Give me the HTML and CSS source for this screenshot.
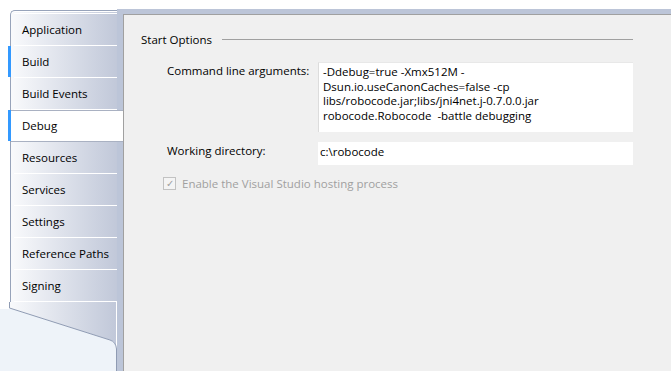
FILE: index.html
```html
<!DOCTYPE html>
<html lang="en">
<head>
    <meta charset="UTF-8">
    <title>Project Properties - Debug</title>
    <link rel="stylesheet" href="styles.css">
</head>
<body>
    <div class="window">
        <!-- Левая колонка с вкладками -->
        <div class="sidebar">
            <div class="strip">
                <ul class="tabs">
                    <li class="tab">Application</li>
                    <li class="tab hot">Build</li>
                    <li class="tab">Build Events</li>
                    <li class="tab selected">Debug</li>
                    <li class="tab">Resources</li>
                    <li class="tab">Services</li>
                    <li class="tab">Settings</li>
                    <li class="tab">Reference Paths</li>
                    <li class="tab">Signing</li>
                </ul>
                <svg class="tail" width="108" height="70" viewBox="0 0 108 70">
                    <defs>
                        <linearGradient id="tabfill" x1="0" y1="0" x2="1" y2="0">
                            <stop offset="0" stop-color="#f9fafc"/>
                            <stop offset="1" stop-color="#c1c8d9"/>
                        </linearGradient>
                    </defs>
                    <path d="M0,0 L0,6 L101,38 Q107,40 107,47 L107,0 Z" fill="url(#tabfill)"/>
                    <path d="M0,6 L101,38 Q107,40 107,47 L107,70 L0,70 Z" fill="#eef3f9"/>
                    <path d="M0.5,0 L0.5,6 L101,38 Q107,40 107.5,47 L107.5,70" fill="none" stroke="#8f9bb3" stroke-width="1"/>
                </svg>
            </div>
        </div>

        <!-- Основная панель -->
        <div class="main">
            <div class="panel">
                <div class="group-title">
                    <span>Start Options</span>
                    <div class="group-line"></div>
                </div>

                <div class="form">
                    <label class="field-label">Command line arguments:</label>
                    <div class="textbox multi">-Ddebug=true -Xmx512M -<br>Dsun.io.useCanonCaches=false -cp<br>libs/robocode.jar;libs/jni4net.j-0.7.0.0.jar<br>robocode.Robocode&nbsp; -battle debugging</div>

                    <label class="field-label">Working directory:</label>
                    <div class="textbox single">c:\robocode</div>
                </div>

                <div class="check-row">
                    <span class="checkbox">&#10003;</span>
                    <span>Enable the Visual Studio hosting process</span>
                </div>
            </div>
        </div>
    </div>
</body>
</html>
```

FILE: styles.css
```css
/* Основные стили */
body, html {
    margin: 0;
    padding: 0;
    height: 100%;
    font-family: 'Open Sans', sans-serif;
    font-size: 11.5px;
    color: #000;
    background-color: #fff;
}

.window {
    display: flex;
    height: 371px;
    overflow: hidden;
}

/* Вкладки слева */
.sidebar {
    width: 117px;
    flex-shrink: 0;
    padding-top: 10px;
    box-sizing: border-box;
    position: relative;
    z-index: 2;
}

.strip {
    margin-left: 10px;
}

.tabs {
    list-style: none;
    margin: 0;
    padding: 2px 0 0 0;
    border-top: 1px solid #97a3ba;
    border-left: 1px solid #97a3ba;
    border-top-left-radius: 5px;
    background: linear-gradient(to right, #f9fafc, #c1c8d9);
    box-shadow: inset 0 1px 0 #fff;
}

.tabs::before {
    content: '';
    display: block;
    height: 1px;
    margin-left: 3px;
    background-color: #fff;
}

.tab {
    position: relative;
    height: 32px;
    line-height: 31px;
    padding-left: 11px;
    box-sizing: border-box;
    white-space: nowrap;
}

.tab::after {
    content: '';
    position: absolute;
    left: 3px;
    right: 0;
    bottom: 0;
    height: 1px;
    background-color: #fff;
}

.tab.hot::before,
.tab.selected::before {
    content: '';
    position: absolute;
    left: -3px;
    top: 0;
    bottom: 1px;
    width: 3px;
    background-color: #3399ff;
}

.tab.selected {
    background-color: #fff;
    margin-right: -6px;
    box-shadow: inset 0 1px 0 #a9b1c2;
}

.tab.selected::after {
    left: 0;
    background-color: #a9b1c2;
}

.tail {
    display: block;
    margin-left: -1px;
}

.sidebar::after {
    content: '';
    position: absolute;
    left: 0;
    top: 309px;
    width: 10px;
    bottom: 0;
    background-color: #eef3f9;
    z-index: -1;
}

/* Правая часть */
.main {
    flex: 1;
    margin-top: 9px;
    padding: 5px 0 0 6px;
    background-color: #bcc5d8;
    display: flex;
}

.panel {
    flex: 1;
    background-color: #f0f0f0;
    border-top: 1px solid #a0a0a0;
    border-left: 1px solid #a0a0a0;
    padding-top: 17px;
}

.group-title {
    display: flex;
    align-items: center;
    padding-left: 17px;
    margin-right: 38px;
}

.group-line {
    flex: 1;
    height: 1px;
    background-color: #a0a0a0;
    margin-left: 10px;
}

.form {
    display: grid;
    grid-template-columns: 151px 315px;
    row-gap: 10px;
    margin-left: 43px;
    margin-top: 15px;
}

.field-label {
    padding-top: 1px;
}

.textbox {
    background-color: #fff;
    box-sizing: border-box;
    white-space: nowrap;
}

.textbox.multi {
    height: 70px;
    padding: 2px 4px;
    line-height: 14.7px;
    border-left: 1px solid #dcdcdc;
    border-top: 1px solid #e8e8e8;
}

.textbox.single {
    height: 23px;
    padding: 2px 2px;
}

.check-row {
    display: flex;
    align-items: center;
    gap: 6px;
    margin-left: 39px;
    margin-top: 11px;
    color: #a0a0a0;
}

.checkbox {
    width: 11px;
    height: 11px;
    border: 1px solid #c2c2c2;
    background-color: #f4f4f4;
    font-size: 10px;
    line-height: 11px;
    text-align: center;
    color: #a0a0a0;
}
```
